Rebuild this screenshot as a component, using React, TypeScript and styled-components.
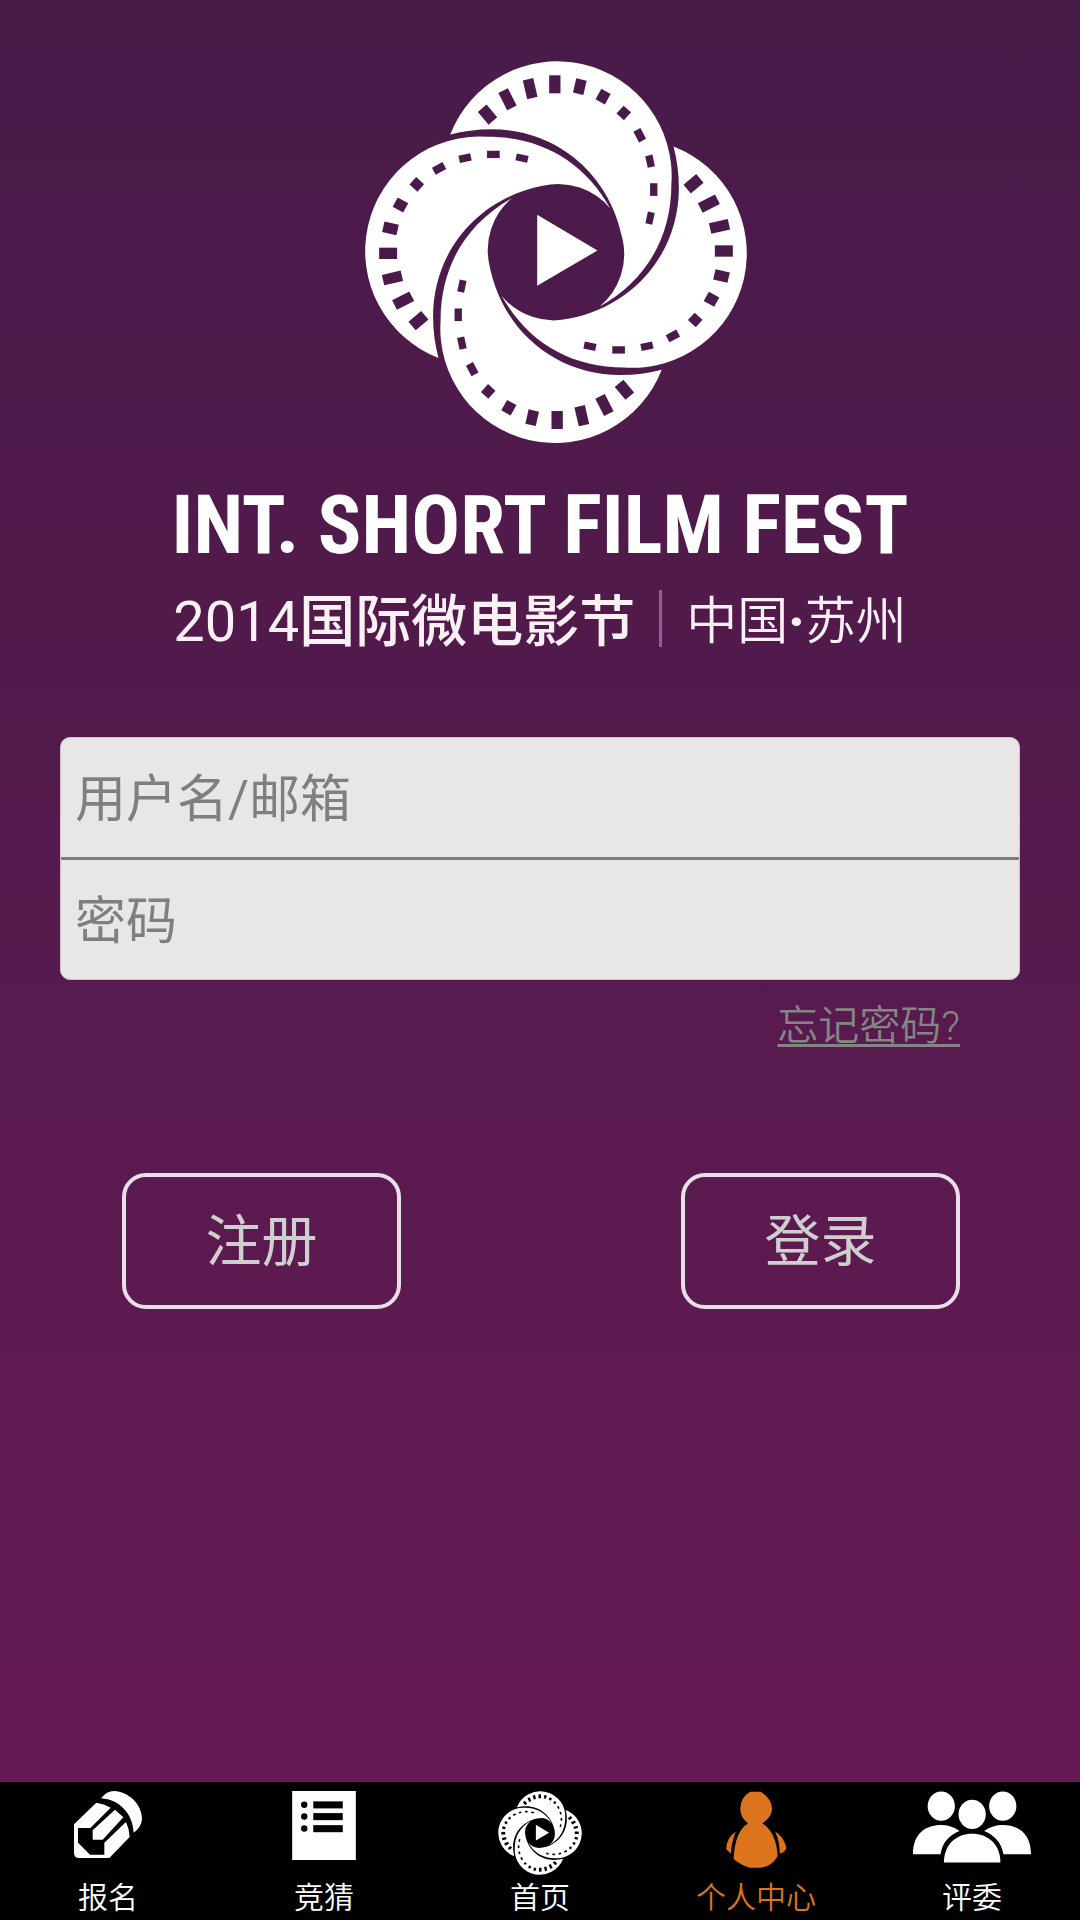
import React from "react";
import styled, { createGlobalStyle } from "styled-components";

const cjk = `"Noto Sans CJK SC", "Noto Sans", sans-serif`;
const mixed = `Roboto, "Noto Sans CJK SC", sans-serif`;

const GlobalStyle = createGlobalStyle`
  *, *::before, *::after { box-sizing: border-box; }
  body { margin: 0; font-family: ${cjk}; background: #000; }
`;

const Page = styled.div`
  min-height: 100vh;
  display: flex;
  flex-direction: column;
  background: linear-gradient(#481b49 0%, #521a4c 35%, #5c1a50 65%, #651a55 93%);
`;

const Main = styled.main`
  flex: 1;
  display: flex;
  flex-direction: column;
  padding: 60px 60px 60px;
`;

const Brand = styled.header`
  display: flex;
  flex-direction: column;
  align-items: center;
  color: #fff;
`;

const Title = styled.h1`
  margin: 32px 0 0;
  font: 700 81px/100px "Roboto Condensed", "Liberation Sans Narrow", "DejaVu Sans Condensed", sans-serif;
  white-space: nowrap;
`;

const Subtitle = styled.p`
  margin: 6px 0 0;
  display: flex;
  align-items: center;
  gap: 24px;
  line-height: 64px;
  color: #fbf1f4;
  font-family: ${mixed};
  white-space: nowrap;
`;

const Festival = styled.span`
  padding-top: 8px;
  font-size: 56px;
  font-weight: 500;
`;

const Year = styled.span`
  font-weight: 400;
`;

const Rule = styled.span`
  width: 3px;
  height: 57px;
  background: #8a6688;
`;

const Place = styled.span`
  padding-top: 8px;
  font-size: 51px;
  font-weight: 350;
`;

const Dot = styled.span`
  font-weight: 900;
`;

const Form = styled.form`
  margin-top: 83px;
  display: flex;
  flex-direction: column;
`;

const Fields = styled.div`
  display: flex;
  flex-direction: column;
  border-radius: 10px;
  border: 1px solid #cfc3cd;
  background: #e8e7e5;
  overflow: hidden;
`;

const Field = styled.input`
  width: 100%;
  height: 119px;
  padding: 3px 14px 0;
  border: 0;
  outline: 0;
  background: transparent;
  color: #555;
  font: 400 51px/72px ${mixed};
  & + & { border-top: 3px solid #7d7e7b; height: 122px; }
  &::placeholder { color: #7f7f7f; opacity: 1; }
`;

const Forgot = styled.a`
  align-self: flex-end;
  margin: 16px 60px 0 0;
  font: 350 41px/60px ${mixed};
  color: #858585;
  text-decoration: underline;
  text-decoration-thickness: 3px;
  text-underline-offset: 4px;
`;

const Actions = styled.div`
  margin-top: 117px;
  padding: 0 60px 0 62px;
  display: flex;
  justify-content: space-between;
`;

const Action = styled.button`
  width: 279px;
  height: 136px;
  padding: 0 0 8px;
  border: 4px solid #e9dfe8;
  border-radius: 24px;
  background: transparent;
  color: #cfcfcf;
  font: 400 56px/80px ${cjk};
`;

const TabBar = styled.nav`
  display: grid;
  grid-template-columns: repeat(5, 1fr);
  padding: 9px 0 3px;
  background: #000;
`;

const Tab = styled.a<{ $active?: boolean }>`
  display: flex;
  flex-direction: column;
  align-items: center;
  color: ${(p) => (p.$active ? "#db741c" : "#fff")};
  text-decoration: none;
  font-size: 30px;
  font-weight: 350;
  line-height: 44px;
`;

const IconSlot = styled.span`
  height: 82px;
  display: flex;
  align-items: flex-start;
`;

const Flower = styled.svg`
  overflow: visible;
`;

const perforations = [
  [413, 192, 34, 50, -40],
  [473, 146, 32, 58, -27],
  [541, 114, 32, 58, -13],
  [615, 101, 34, 54, 0],
  [690, 108, 32, 44, 13],
  [760, 138, 32, 36, 29],
  [822, 187, 30, 32, 42],
  [870, 254, 24, 36, -28],
  [901, 332, 22, 36, -12],
  [912, 417, 22, 38, 0],
  [901, 503, 21, 36, 12],
];

function FilmFlower({ width, viewBox, hole }: { width: number; viewBox: string; hole: string }) {
  return (
    <Flower width={width} viewBox={viewBox} aria-hidden="true">
      {[0, 90, 180, 270].map((turn) => (
        <g key={turn} transform={`rotate(${turn} 618.5 605)`}>
          <path
            fill="#fff"
            d="M301 252A344 344 0 0 1 965 400C965 560 890 690 750 768A204 204 0 0 0 818 565C780 370 620 236 425 236C380 236 340 242 301 252Z"
          />
          {perforations.map(([x, y, w, h, r]) => (
            <rect
              key={x + y}
              x={x - w / 2}
              y={y - h / 2}
              width={w}
              height={h}
              fill={hole}
              transform={`rotate(${r} ${x} ${y})`}
            />
          ))}
        </g>
      ))}
      <path fill="#fff" d="M562 493L743 600L562 706Z" />
    </Flower>
  );
}

const PencilIcon = () => (
  <svg width="68" height="67" viewBox="222 96 204 201" fill="#fff" aria-hidden="true">
    <path d="M289 131Q312 134 332 146L271 207H234V251L270 287H313V251L378 189Q388 210 389 234L328 297H238Q222 297 222 281V196Z" />
    <path d="M345 152L370 175L308 242H278V214Z" />
    <path d="M303 118Q320 96 342 96C385 98 426 135 426 180Q424 205 401 221C398 165 360 122 303 118Z" />
  </svg>
);

const ListIcon = () => (
  <svg width="64" height="69" viewBox="877 93 190 206" aria-hidden="true">
    <path fill="#fff" d="M877 93h190v206h-190z" />
    {[134, 169, 205].map((y) => (
      <g key={y}>
        <circle cx="913" cy={y} r="9.5" />
        <rect x="940" y={y - 10} width="88" height="21" />
      </g>
    ))}
  </svg>
);

const PersonIcon = () => (
  <svg width="61" height="77" viewBox="134 94 181 230" fill="currentColor" aria-hidden="true">
    <path d="M205 96H237Q271 118 271 148Q270 172 242 191Q282 214 288 288Q268 322 235 323H205Q182 318 156 297Q160 214 199 191Q176 172 176 146Q177 113 205 96Z" />
    <path d="M163 215Q135 233 134 268L148 281Q150 245 163 215Z" />
    <path d="M280 215Q306 230 314 264Q308 278 294 281Q294 245 280 215Z" />
  </svg>
);

const JuryIcon = () => (
  <svg width="118" height="72" viewBox="698 97 355 216" fill="#fff" aria-hidden="true">
    <ellipse cx="783" cy="142" rx="41" ry="44" />
    <ellipse cx="968" cy="142" rx="41" ry="44" />
    <ellipse cx="876" cy="167" rx="41" ry="44" />
    <path d="M698 287C698 225 735 199 783 199Q812 199 838 217C805 230 785 255 781 287Z" />
    <path d="M1053 287C1053 225 1015 199 968 199Q938 199 912 217C945 230 965 255 970 287Z" />
    <path d="M791 312C791 255 830 225 876 225C922 225 961 255 961 312Z" />
  </svg>
);

const tabs = [
  { label: "报名", icon: <PencilIcon /> },
  { label: "竞猜", icon: <ListIcon /> },
  { label: "首页", icon: <FilmFlower width={84} viewBox="42 28 1153 1154" hole="#000" /> },
  { label: "个人中心", icon: <PersonIcon />, active: true },
  { label: "评委", icon: <JuryIcon /> },
];

export default function App() {
  return (
    <>
      <GlobalStyle />
      <Page>
        <Main>
          <Brand>
            <FilmFlower width={416} viewBox="-54 28 1249 1154" hole="#4a1b4a" />
            <Title>INT. SHORT FILM FEST</Title>
            <Subtitle>
              <Festival>
                <Year>2014</Year>国际微电影节
              </Festival>
              <Rule />
              <Place>
                中国<Dot>·</Dot>苏州
              </Place>
            </Subtitle>
          </Brand>
          <Form onSubmit={(e) => e.preventDefault()}>
            <Fields>
              <Field type="text" placeholder="用户名/邮箱" aria-label="用户名/邮箱" />
              <Field type="password" placeholder="密码" aria-label="密码" />
            </Fields>
            <Forgot href="#forgot">忘记密码?</Forgot>
            <Actions>
              <Action type="button">注册</Action>
              <Action type="submit">登录</Action>
            </Actions>
          </Form>
        </Main>
        <TabBar>
          {tabs.map((t) => (
            <Tab key={t.label} href="#" $active={t.active} aria-current={t.active ? "page" : undefined}>
              <IconSlot>{t.icon}</IconSlot>
              {t.label}
            </Tab>
          ))}
        </TabBar>
      </Page>
    </>
  );
}
